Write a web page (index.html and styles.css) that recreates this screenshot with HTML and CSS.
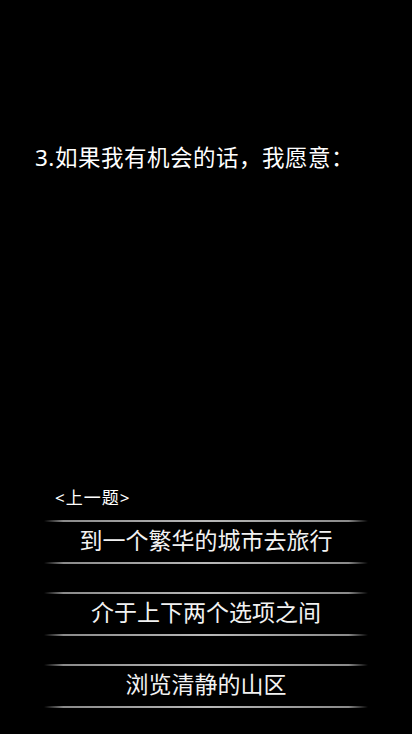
FILE: index.html
```html
<!DOCTYPE html>
<html lang="zh">
<head>
<meta charset="utf-8">
<title>测试</title>
<link rel="stylesheet" href="styles.css">
</head>
<body>
<div class="page">
  <div class="question">3.如果我有机会的话，我愿意：</div>
  <div class="bottom">
    <div class="prev">&lt;上一题&gt;</div>
    <div class="options">
      <div class="option"><div class="line"></div><div class="label">到一个繁华的城市去旅行</div><div class="line"></div></div>
      <div class="option"><div class="line"></div><div class="label">介于上下两个选项之间</div><div class="line"></div></div>
      <div class="option"><div class="line"></div><div class="label">浏览清静的山区</div><div class="line"></div></div>
    </div>
  </div>
</div>
</body>
</html>
```
FILE: styles.css
```css
html, body {
  margin: 0;
  padding: 0;
  background: #000;
}
body {
  font-family: "Noto Sans", "Noto Sans CJK SC", sans-serif;
  color: #fff;
}
.page {
  height: 734px;
  display: flex;
  flex-direction: column;
  justify-content: space-between;
  overflow: hidden;
}
.question {
  padding: 142px 0 0 35px;
  font-size: 22.5px;
  letter-spacing: 0.5px;
  line-height: 32px;
}
.bottom {
  padding-bottom: 26px;
}
.prev {
  padding-left: 55px;
  font-size: 17px;
  letter-spacing: 1px;
  line-height: 24px;
  margin-bottom: 10px;
}
.options {
  display: flex;
  flex-direction: column;
  gap: 28px;
}
.option {
  display: flex;
  flex-direction: column;
}
.line {
  height: 2px;
  margin: 0 44px;
  background: linear-gradient(to right, rgba(150,150,150,0) 0%, #8a8a8a 6%, #b8b8b8 50%, #8a8a8a 94%, rgba(150,150,150,0) 100%);
}
.label {
  height: 40px;
  line-height: 36px;
  font-size: 23px;
  text-align: center;
  color: #f2f2f2;
}
```
